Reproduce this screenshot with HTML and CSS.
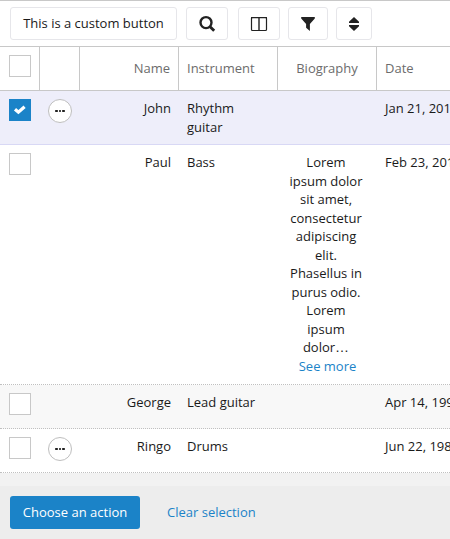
FILE: index.html
```html
<!DOCTYPE html>
<html lang="en">
<head>
<meta charset="utf-8">
<title>Members</title>
<link rel="stylesheet" href="styles.css">
</head>
<body>
<div class="toolbar">
  <button class="btn btn-custom">This is a custom button</button>
  <button class="btn btn-search" aria-label="Search"><svg width="18" height="18" viewBox="0 0 18 18"><circle cx="8" cy="7.600" r="5.500" fill="none" stroke="#222" stroke-width="2.400"/><path d="M11.800 11.500L16.200 15.800" stroke="#222" stroke-width="2.900"/></svg></button>
  <button class="btn btn-columns" aria-label="Columns"><svg width="18" height="16" viewBox="0 0 18 16"><rect x="1.500" y="1.500" width="15" height="13" rx="1" fill="none" stroke="#222" stroke-width="1.200"/><path d="M1 1.600h16M9 1v14" stroke="#222" stroke-width="1.400"/></svg></button>
  <button class="btn btn-filter" aria-label="Filter"><svg width="14" height="14" viewBox="0 0 14 14"><path d="M.2 0h13.600v1.600L8.900 7v7L5.100 10.800V7L.2 1.600z" fill="#222"/></svg></button>
  <button class="btn btn-sort" aria-label="Sort"><svg width="10" height="14" viewBox="0 0 10 14"><path d="M5 0l5 4.700v1.300H0V4.700zM5 14l5-4.700V8H0v1.300z" fill="#222"/></svg></button>
</div>
<div class="table">
  <div class="row head">
    <div class="cell"><span class="check"></span></div>
    <div class="cell"></div>
    <div class="cell name">Name</div>
    <div class="cell">Instrument</div>
    <div class="cell bio">Biography</div>
    <div class="cell">Date</div>
  </div>
  <div class="row john">
    <div class="cell"><span class="check checked"><svg width="14" height="12" viewBox="0 0 14 12"><path d="M2 5.200L5.400 8.200 11.600 2.700" fill="none" stroke="#fff" stroke-width="3.200"/></svg></span></div>
    <div class="cell"><span class="more"><i></i><i></i><i></i></span></div>
    <div class="cell name">John</div>
    <div class="cell">Rhythm guitar</div>
    <div class="cell bio"></div>
    <div class="cell">Jan 21, 2015</div>
  </div>
  <div class="row paul">
    <div class="cell"><span class="check"></span></div>
    <div class="cell"></div>
    <div class="cell name">Paul</div>
    <div class="cell">Bass</div>
    <div class="cell bio">Lorem<br>ipsum dolor<br>sit amet,<br>consectetur<br>adipiscing<br>elit.<br>Phasellus in<br>purus odio.<br>Lorem<br>ipsum<br>dolor<span class="cut">…</span><br><a class="see-more">See more</a></div>
    <div class="cell">Feb 23, 2012</div>
  </div>
  <div class="row alt">
    <div class="cell"><span class="check"></span></div>
    <div class="cell"></div>
    <div class="cell name">George</div>
    <div class="cell">Lead guitar</div>
    <div class="cell bio"></div>
    <div class="cell">Apr 14, 1992</div>
  </div>
  <div class="row">
    <div class="cell"><span class="check"></span></div>
    <div class="cell"><span class="more"><i></i><i></i><i></i></span></div>
    <div class="cell name">Ringo</div>
    <div class="cell">Drums</div>
    <div class="cell bio"></div>
    <div class="cell">Jun 22, 1985</div>
  </div>
</div>
<div class="actions">
  <button class="primary">Choose an action</button>
  <a class="clear">Clear selection</a>
</div>
</body>
</html>
```
FILE: styles.css
```css
* { box-sizing: border-box; }
body {
  margin: 0;
  height: 539px;
  overflow: hidden;
  background: #f2f2f2;
  color: #1a1a1a;
  font: 13px/18.5px "Open Sans", sans-serif;
}
.toolbar {
  display: flex;
  height: 46px;
  padding: 6px 10px 0;
  background: #fff;
  border-top: 1px solid #c8c8c8;
}
.btn {
  display: flex;
  align-items: center;
  justify-content: center;
  flex: none;
  height: 33px;
  padding: 0;
  background: #fff;
  border: 1px solid #e6e6ea;
  border-radius: 3px;
  color: #1a1a1a;
  font: inherit;
}
.btn-custom { width: 167px; margin-right: 9px; }
.btn-search { width: 42px; margin-right: 10px; }
.btn-columns { width: 42px; margin-right: 8px; }
.btn-filter { width: 40px; margin-right: 8px; }
.btn-sort { width: 36px; }
.table {
  overflow: hidden;
  border-top: 1px solid #c8c8c8;
}
.row {
  display: grid;
  grid-template-columns: 40px 40px 99px 99px 99px 98px;
  height: 44px;
  background: #fff;
  border-bottom: 1px dotted #c0c0c0;
}
.cell {
  padding: 8px 8px 0;
  white-space: nowrap;
}
.cell:first-child { padding-left: 9px; }
.name { text-align: right; }
.bio { text-align: center; padding-right: 11px; }
.head {
  color: #6c6c6c;
  border-bottom: 1px solid #c8c8c8;
}
.head .cell {
  padding-top: 12px;
  border-right: 1px solid #c8c8c8;
}
.head .cell:first-child { padding-top: 8px; }
.head .bio { padding-right: 8px; }
.john {
  height: 54px;
  background: #eeeefa;
  border-bottom: 1px solid #d8d8f5;
}
.john .cell { white-space: normal; }
.john .cell:last-child { white-space: nowrap; }
.paul { height: 240px; }
.alt { background: #f8f8f8; }
.check {
  display: flex;
  align-items: center;
  justify-content: center;
  width: 22px;
  height: 22px;
  background: #fff;
  border: 1px solid #c8c8c8;
}
.checked {
  background: #1b83c8;
  border-color: #1b83c8;
}
.more {
  display: flex;
  align-items: center;
  justify-content: center;
  gap: 1px;
  width: 24px;
  height: 24px;
  background: #fff;
  border: 1px solid #bebebe;
  border-radius: 50%;
}
.more i {
  width: 2.4px;
  height: 2.4px;
  background: #222;
  border-radius: .8px;
}
.cut { font-family: "Liberation Sans", sans-serif; font-size: 14px; line-height: 1; }
.see-more { padding-left: 3px; color: #1b83c8; }
.actions {
  display: flex;
  align-items: center;
  gap: 27px;
  height: 53px;
  margin-top: 13px;
  padding: 0 10px;
  background: #ededed;
}
.primary {
  width: 130px;
  height: 33px;
  padding: 0;
  border: 0;
  border-radius: 3px;
  background: #1b83c8;
  color: #fff;
  font: inherit;
}
.clear { color: #1b83c8; }
```
